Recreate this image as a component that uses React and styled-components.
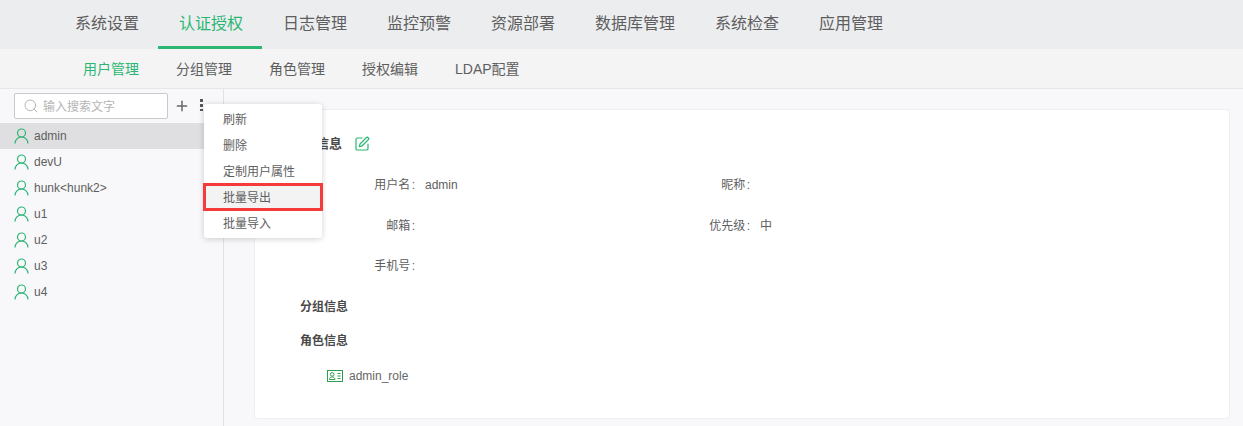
import React from "react";
import styled, { createGlobalStyle } from "styled-components";
import { Plus, Search, SquarePen } from "lucide-react";

const GlobalStyle = createGlobalStyle`
  html, body {
    margin: 0;
    padding: 0;
    background: #f8f8fa;
  }
  body {
    font-family: "Liberation Sans", "Noto Sans CJK SC", sans-serif;
    color: #5e5e5e;
  }
  * {
    box-sizing: border-box;
  }
`;

const Page = styled.div`
  position: relative;
  width: 1243px;
  height: 426px;
  overflow: hidden;
  display: flex;
  flex-direction: column;
`;

const TopNav = styled.nav`
  flex: none;
  height: 49px;
  padding-left: 54px;
  background: #ecedef;
  display: flex;
`;

const TopItem = styled.div`
  padding: 0 19px 0 21px;
  height: 49px;
  line-height: 48px;
  font-size: 16px;
  white-space: nowrap;
  color: ${({ $active }) => ($active ? "#2bb673" : "#5e5e5e")};
  border-bottom: 3px solid ${({ $active }) => ($active ? "#2bb673" : "transparent")};
`;

const SubNav = styled.nav`
  flex: none;
  height: 40px;
  padding-left: 83px;
  background: #f4f4f5;
  border-bottom: 1px solid #e6e6e8;
  display: flex;
  gap: 37px;
`;

const SubItem = styled.div`
  line-height: 40px;
  font-size: 14px;
  white-space: nowrap;
  color: ${({ $active }) => ($active ? "#2bb673" : "#5e5e5e")};
`;

const Body = styled.div`
  flex: 1;
  min-height: 0;
  display: flex;
`;

const Sidebar = styled.aside`
  flex: none;
  width: 224px;
  border-right: 1px solid #e2e2e5;
  background: #f8f8fa;
`;

const SearchRow = styled.div`
  height: 34px;
  padding: 4px 0 0 14px;
  display: flex;
  align-items: flex-start;
`;

const SearchBox = styled.div`
  width: 154px;
  height: 26px;
  padding: 0 0 2px 8px;
  background: #fff;
  border: 1px solid #c9c9cc;
  border-radius: 2px;
  display: flex;
  align-items: center;
  gap: 4px;
  font-size: 12px;
  color: #b4b4b4;
`;

const SearchIcon = styled(Search)`
  width: 16px;
  height: 16px;
  margin-top: 2px;
  color: #a8a8a8;
  stroke-width: 1.3;
`;

const AddIcon = styled(Plus)`
  width: 16px;
  height: 16px;
  margin: 5px 0 0 6px;
  color: #666;
  stroke-width: 2.2;
`;

const MoreDots = styled.div`
  margin: 5px 0 0 10px;
  width: 3px;
  height: 13px;
  background: radial-gradient(circle, #555 1.4px, transparent 1.7px) 0 0 / 3px 5px repeat-y;
`;

const UserRow = styled.div`
  height: 26px;
  padding-left: 14px;
  display: flex;
  align-items: center;
  gap: 5px;
  font-size: 12px;
  color: #5e5e5e;
  background: ${({ $selected }) => ($selected ? "#dfdfe1" : "transparent")};
`;

const Main = styled.main`
  flex: 1;
  min-width: 0;
  padding: 20px 13px 8px 30px;
`;

const Card = styled.section`
  height: 310px;
  padding: 24px 0 0 45px;
  background: #fff;
  border: 1px solid #eeeef0;
  border-radius: 4px;
`;

const SectionTitle = styled.div`
  display: flex;
  align-items: center;
  height: 20px;
  font-size: 12px;
  font-weight: 700;
  color: #4a4a4a;
`;

const CardTitle = styled(SectionTitle)`
  margin-left: -10px;
  gap: 12px;
  font-size: 13px;
  line-height: 18px;
`;

const EditIcon = styled(SquarePen)`
  width: 16px;
  height: 16px;
  color: #2bb673;
  stroke-width: 1.8;
`;

const FieldGrid = styled.div`
  margin: 21px 0 -1px;
  display: grid;
  grid-template-columns: repeat(2, 335px);
  grid-auto-rows: 40.5px;
`;

const Field = styled.div`
  display: flex;
  gap: 10px;
  font-size: 12px;
  line-height: 20px;
  color: #5e5e5e;
`;

const FieldLabel = styled.span`
  width: 115px;
  text-align: right;
  word-spacing: -2px;
`;

const GroupTitle = styled(SectionTitle)`
  margin-bottom: 14px;
`;

const RoleRow = styled.div`
  margin: 16px 0 0 27px;
  display: flex;
  align-items: center;
  gap: 6px;
  height: 20px;
  font-size: 12px;
  color: #666;
`;

const Menu = styled.div`
  position: absolute;
  left: 204px;
  top: 104px;
  width: 118px;
  padding: 2px 0;
  background: #fff;
  border-radius: 3px;
  box-shadow: 0 1px 6px rgba(0, 0, 0, 0.18);
`;

const MenuItem = styled.div`
  position: relative;
  height: 26px;
  line-height: 28px;
  padding-left: 19px;
  font-size: 12px;
  color: #5e5e5e;
  background: ${({ $marked }) => ($marked ? "#f3f3f3" : "transparent")};
`;

const Highlight = styled.div`
  position: absolute;
  inset: -1px -1px -1px -1px;
  border: 3px solid #f43a3a;
`;

const UserIcon = () => (
  <svg width="15" height="16" viewBox="0 0 15 16" fill="none" stroke="#2bb673" strokeWidth="1.2">
    <circle cx="7.5" cy="5" r="4" />
    <path d="M1 15.5c0-3.8 2.8-6.5 6.5-6.5s6.5 2.7 6.5 6.5" />
  </svg>
);

const RoleIcon = () => (
  <svg width="16" height="12" viewBox="0 0 16 12" fill="none" stroke="#2e9e4f" strokeWidth="1">
    <rect x="0.5" y="0.5" width="15" height="11" />
    <circle cx="5.2" cy="4.4" r="1.8" />
    <path d="M2.5 9.5c0-1.7 1.2-2.6 2.7-2.6s2.7.9 2.7 2.6z" />
    <path d="M10.5 3.5h3M10.5 6h3M10.5 8.5h3" />
  </svg>
);

const topItems = ["系统设置", "认证授权", "日志管理", "监控预警", "资源部署", "数据库管理", "系统检查", "应用管理"];
const subItems = ["用户管理", "分组管理", "角色管理", "授权编辑", "LDAP配置"];
const users = ["admin", "devU", "hunk<hunk2>", "u1", "u2", "u3", "u4"];
const menuItems = ["刷新", "删除", "定制用户属性", "批量导出", "批量导入"];
const fields = [
  ["用户名 :", "admin"],
  ["昵称 :", ""],
  ["邮箱 :", ""],
  ["优先级 :", "中"],
  ["手机号 :", ""],
];

export default function App() {
  return (
    <Page>
      <GlobalStyle />
      <TopNav>
        {topItems.map((item) => (
          <TopItem key={item} $active={item === "认证授权"}>
            {item}
          </TopItem>
        ))}
      </TopNav>
      <SubNav>
        {subItems.map((item) => (
          <SubItem key={item} $active={item === "用户管理"}>
            {item}
          </SubItem>
        ))}
      </SubNav>
      <Body>
        <Sidebar>
          <SearchRow>
            <SearchBox>
              <SearchIcon />
              输入搜索文字
            </SearchBox>
            <AddIcon />
            <MoreDots />
          </SearchRow>
          {users.map((user) => (
            <UserRow key={user} $selected={user === "admin"}>
              <UserIcon />
              {user}
            </UserRow>
          ))}
        </Sidebar>
        <Main>
          <Card>
            <CardTitle>
              用户信息
              <EditIcon />
            </CardTitle>
            <FieldGrid>
              {fields.map(([label, value]) => (
                <Field key={label}>
                  <FieldLabel>{label}</FieldLabel>
                  <span>{value}</span>
                </Field>
              ))}
            </FieldGrid>
            <GroupTitle>分组信息</GroupTitle>
            <GroupTitle>角色信息</GroupTitle>
            <RoleRow>
              <RoleIcon />
              admin_role
            </RoleRow>
          </Card>
        </Main>
      </Body>
      <Menu>
        {menuItems.map((item) => (
          <MenuItem key={item} $marked={item === "批量导出"}>
            {item}
            {item === "批量导出" && <Highlight />}
          </MenuItem>
        ))}
      </Menu>
    </Page>
  );
}
